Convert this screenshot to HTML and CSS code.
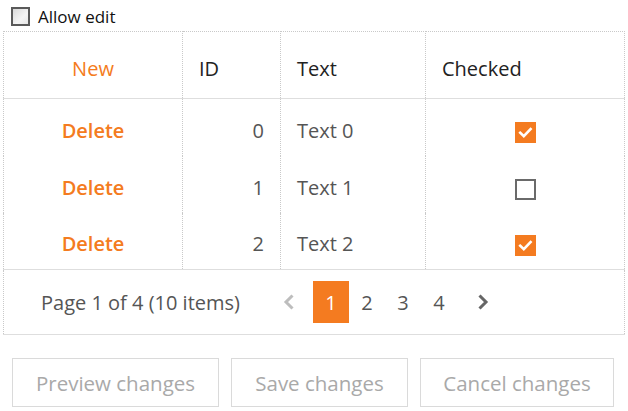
FILE: index.html
```html
<!DOCTYPE html>
<html>
<head>
<meta charset="utf-8">
<link rel="stylesheet" href="styles.css">
</head>
<body>
<div class="page">
  <label class="toolbar">
    <span class="edit-box"></span>
    <span class="edit-label">Allow edit</span>
  </label>
  <table class="grid">
    <colgroup>
      <col class="c-cmd">
      <col class="c-id">
      <col class="c-text">
      <col class="c-check">
    </colgroup>
    <thead>
      <tr>
        <th class="cmd">New</th>
        <th>ID</th>
        <th>Text</th>
        <th>Checked</th>
      </tr>
    </thead>
    <tbody>
      <tr>
        <td class="cmd">Delete</td>
        <td class="num">0</td>
        <td>Text 0</td>
        <td class="chk"><span class="box on"><svg viewBox="0 0 21 21" width="21" height="21"><path d="M5.2 10.8 L8.8 14.2 L15.6 7" fill="none" stroke="#fff" stroke-width="2.6" stroke-linecap="square"/></svg></span></td>
      </tr>
      <tr>
        <td class="cmd">Delete</td>
        <td class="num">1</td>
        <td>Text 1</td>
        <td class="chk"><span class="box off"></span></td>
      </tr>
      <tr>
        <td class="cmd">Delete</td>
        <td class="num">2</td>
        <td>Text 2</td>
        <td class="chk"><span class="box on"><svg viewBox="0 0 21 21" width="21" height="21"><path d="M5.2 10.8 L8.8 14.2 L15.6 7" fill="none" stroke="#fff" stroke-width="2.6" stroke-linecap="square"/></svg></span></td>
      </tr>
    </tbody>
    <tfoot>
      <tr>
        <td colspan="4" class="pager-cell">
          <div class="pager">
            <span class="summary">Page 1 of 4 (10 items)</span>
            <span class="pg nav prev"><svg viewBox="0 0 12 16" width="12" height="16"><path d="M9.5 1.5 L3 8 L9.5 14.5" fill="none" stroke="#bdbdbd" stroke-width="3"/></svg></span>
            <span class="pg active">1</span>
            <span class="pg">2</span>
            <span class="pg">3</span>
            <span class="pg">4</span>
            <span class="pg nav next"><svg viewBox="0 0 12 16" width="12" height="16"><path d="M2.5 1.5 L9 8 L2.5 14.5" fill="none" stroke="#666" stroke-width="3"/></svg></span>
          </div>
        </td>
      </tr>
    </tfoot>
  </table>
  <div class="actions">
    <button class="btn b-preview">Preview changes</button>
    <button class="btn b-save">Save changes</button>
    <button class="btn b-cancel">Cancel changes</button>
  </div>
</div>
</body>
</html>
```
FILE: styles.css
```css
html, body {
  margin: 0;
  padding: 0;
  background: #fff;
}
body {
  font-family: "Open Sans", "Noto Sans", sans-serif;
  color: #555;
}
.page {
  padding: 0 0 0 3px;
  width: 621px;
}
.toolbar {
  display: flex;
  align-items: center;
  height: 31px;
  padding-left: 8px;
  gap: 8px;
  box-sizing: border-box;
  padding-top: 1px;
}
.edit-box {
  width: 19px;
  height: 19px;
  box-sizing: border-box;
  border: 2px solid #5a5a5a;
  background: linear-gradient(135deg, #d9d9d9, #f4f4f4 60%, #e6e6e6);
}
.edit-label {
  font-size: 17px;
  color: #111;
}
.grid {
  width: 621px;
  border-collapse: collapse;
  table-layout: fixed;
  font-size: 20px;
}
.c-cmd { width: 179px; }
.c-id { width: 98px; }
.c-text { width: 145px; }
.c-check { width: 199px; }
.grid th, .grid td {
  border-left: 1px dotted #c9c9c9;
  border-right: 1px dotted #c9c9c9;
  padding: 0 16px;
  white-space: nowrap;
}
.grid th {
  height: 67px;
  padding-top: 6px;
  box-sizing: border-box;
  font-weight: normal;
  text-align: left;
  color: #222;
  border-top: 1px dotted #c9c9c9;
  border-bottom: 1px solid #dedede;
}
.grid th.cmd {
  text-align: center;
  color: #f47b20;
}
.grid tbody td {
  height: 57px;
  box-sizing: border-box;
  padding-top: 6px;
  vertical-align: middle;
}
.grid td.cmd {
  text-align: center;
  color: #f47b20;
  font-weight: 600;
}
.grid td.num {
  text-align: right;
}
.grid td.chk {
  text-align: center;
}
.box {
  display: inline-block;
  width: 21px;
  height: 21px;
  box-sizing: border-box;
  vertical-align: middle;
}
.box svg { display: block; }
.box.on {
  background: #f47b20;
}
.box.off {
  border: 2px solid #6a6a6a;
  background: #fff;
}
.grid td.pager-cell {
  height: 64px;
  padding: 0 0 0 37px;
  border-top: 1px solid #dedede;
  border-bottom: 1px solid #dedede;
  vertical-align: middle;
}
.pager {
  display: flex;
  align-items: center;
}
.summary {
  margin-right: 31px;
}
.pg {
  width: 36px;
  height: 42px;
  display: flex;
  align-items: center;
  justify-content: center;
  color: #555;
}
.pg.active {
  background: #f47b20;
  color: #fff;
}
.pg.prev { margin-right: 6px; }
.pg.next { margin-left: 8px; }
.actions {
  display: flex;
  gap: 12px;
  margin-top: 23px;
  padding-left: 9px;
}
.btn {
  height: 49px;
  border: 1px solid #dadada;
  background: #fff;
  font-family: "Open Sans", "Noto Sans", sans-serif;
  font-size: 20.5px;
  color: #a9a9a9;
  padding: 0;
}
.b-preview { width: 207px; }
.b-save { width: 177px; }
.b-cancel { width: 194px; }
```
